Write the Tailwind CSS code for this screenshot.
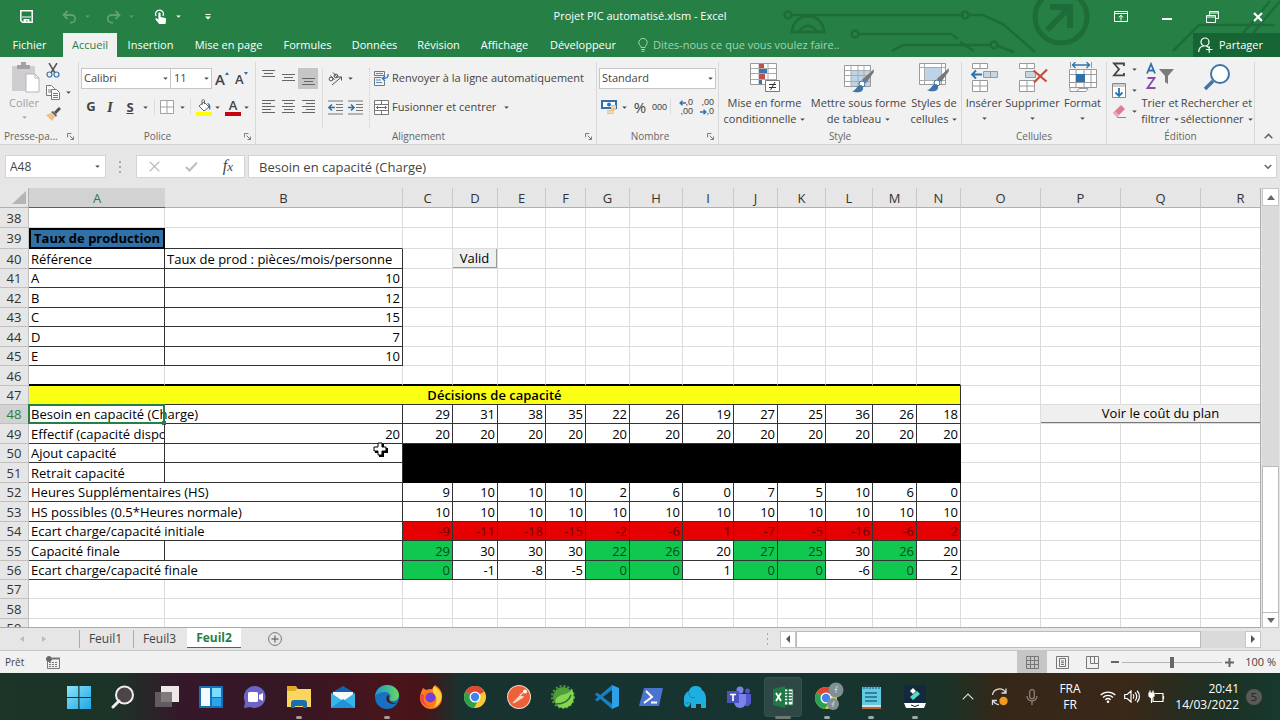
<!DOCTYPE html>
<html lang="fr">
<head>
    <meta charset="UTF-8">
    <meta name="viewport" content="width=device-width, initial-scale=1.0">
    <title>Projet PIC automatisé.xlsm - Excel</title>
    <script src="https://cdn.jsdelivr.net/npm/@tailwindcss/browser@4"></script>
</head>
<body class="h-screen overflow-hidden flex flex-col bg-[#e6e6e6] font-['Open_Sans',sans-serif] text-[11px] text-[#444]">
    <!-- Shared icons -->
    <svg class="hidden">
        <symbol id="caret" viewBox="0 0 6 4"><path d="M0 .5h6L3 3.5z" fill="currentColor"/></symbol>
        <symbol id="launcher" viewBox="0 0 8 8"><path d="M.5 5V.5H5M3 3l4 4M7.500 4v3.500H4" fill="none" stroke="currentColor"/></symbol>
    </svg>

    <!-- Title bar and tabs -->
    <header class="relative bg-[#268046] text-white shrink-0">
        <svg class="absolute right-0 top-0 w-[500px] h-[57px]" viewBox="0 0 500 57" fill="none" stroke="#1e6c39" stroke-width="2.500">
            <circle cx="8" cy="15" r="3.500"/><path d="M12 15h172"/>
            <circle cx="75" cy="34" r="3.500"/><path d="M79 34h92l7 5M112 51l11-6h72"/>
            <path d="M12 32a16 16 0 0 1 32 0zM20 31a9 9 0 0 1 16 0" stroke-width="3"/>
            <circle cx="185" cy="15" r="3.500"/><path d="M189 15h14l20 9 32 28M180 42l14 9M180 45h31"/><circle cx="214" cy="45" r="3.500"/><path d="M218 46l16 6"/>
            <circle cx="281" cy="17" r="26" stroke-width="5"/>
            <path d="M267 30l21-21M270 7h20v21" stroke-width="6"/>
            <path d="M393 51l26-26h76M448 51l42-50M458 51l42-50"/>
        </svg>
        <div class="relative h-[33px] flex items-center">
            <div class="w-[300px] flex items-center pl-5 shrink-0">
                <button aria-label="Enregistrer"><svg class="w-[13px] h-[13px]" viewBox="0 0 13 13"><path d="M.8.8h11.400v11.400H2.500L.8 10.500z" fill="none" stroke="#fff" stroke-width="1.500"/><path d="M2 6.500h9v1H2zM3.500 9h6v4h-2v-2.500H6V13H3.500z" fill="#fff"/></svg></button>
                <button aria-label="Annuler" class="ml-[29px] text-[#5fa078] flex items-center gap-2"><svg class="w-[15px] h-[14px]" viewBox="0 0 15 14" fill="none" stroke="currentColor" stroke-width="1.800"><path d="M5.500 1L1.500 5l4 4M2 5h7.500a3.800 3.800 0 0 1 0 7.600H8"/></svg><svg class="w-[5px] h-[3px]"><use href="#caret"/></svg></button>
                <button aria-label="Rétablir" class="ml-4 text-[#5fa078] flex items-center gap-2"><svg class="w-[15px] h-[14px]" viewBox="0 0 15 14" fill="none" stroke="currentColor" stroke-width="1.800"><path d="M9.500 1l4 4-4 4M13 5H5.500a3.800 3.800 0 0 0 0 7.600H7"/></svg><svg class="w-[5px] h-[3px]"><use href="#caret"/></svg></button>
                <button aria-label="Mode tactile" class="ml-5 flex items-center gap-2"><svg class="w-[14px] h-[15px]" viewBox="0 0 14 15"><path d="M2 7a4 4 0 1 1 7 0" fill="none" stroke="#fff" stroke-width="1.300"/><path d="M4.400 4.500c0-1.500 2.200-1.500 2.200 0V8l4.600 1c.7.200 1 .6.900 1.300L11.500 15H5.200L1.500 10.500c-.4-.9.500-1.500 1.300-1l1.600 1z" fill="#fff"/></svg><svg class="w-[5px] h-[3px]"><use href="#caret"/></svg></button>
                <button aria-label="Personnaliser la barre" class="ml-6"><svg class="w-[6px] h-[6px]" viewBox="0 0 6 6" fill="#fff"><path d="M.5 0h5v1h-5zM0 2.500h6L3 5.500z"/></svg></button>
            </div>
            <h1 class="flex-1 text-center pr-5">Projet PIC automatisé.xlsm - Excel</h1>
            <div class="w-[280px] flex items-center justify-end gap-[34px] pr-[17px] shrink-0">
                <button aria-label="Options du ruban"><svg class="w-[14px] h-[11px]" viewBox="0 0 14 11" fill="none" stroke="#fff"><path d="M.5.5h13v10H.5zM.5 2.500h13M7 9.500v-5M4.700 6.500L7 4.300l2.300 2.200"/></svg></button>
                <button aria-label="Réduire"><svg class="w-[10px] h-[10px]" viewBox="0 0 10 10"><path d="M0 6h10v2H0z" fill="#fff"/></svg></button>
                <button aria-label="Restaurer"><svg class="w-[13px] h-[12px]" viewBox="0 0 13 12" fill="none" stroke="#fff"><path d="M.5 4.500h9v7h-9zM.5 6h9M3.500 4V.500h9v7H10M3.500 2h9"/></svg></button>
                <button aria-label="Fermer"><svg class="w-[10px] h-[10px]" viewBox="0 0 10 10"><path d="M1 1l8 8M9 1L1 9" stroke="#fff" stroke-width="2.200"/></svg></button>
            </div>
        </div>
        <nav class="relative h-6 flex items-stretch">
            <button class="w-[63px] pr-1">Fichier</button>
            <button class="w-[54px] bg-[#f1f1f1] text-[#268046]">Accueil</button>
            <button class="w-[67px]">Insertion</button>
            <button class="w-[89px]">Mise en page</button>
            <button class="w-[69px]">Formules</button>
            <button class="w-[65px]">Données</button>
            <button class="w-[63px]">Révision</button>
            <button class="w-[69px]">Affichage</button>
            <button class="w-[88px]">Développeur</button>
            <label class="flex items-center gap-[5px] ml-[11px] text-[#a5d0b3]">
                <svg class="w-[10px] h-[14px]" viewBox="0 0 10 14" fill="none" stroke="currentColor"><path d="M3 9.500C3 7.500.8 7 .8 4.600a4.200 4.200 0 0 1 8.400 0C9.200 7 7 7.500 7 9.500zM3 11.500h4M3.500 13.300h3"/></svg>
                <input type="text" aria-label="Dites-nous ce que vous voulez faire" placeholder="Dites-nous ce que vous voulez faire.." class="w-[220px] bg-transparent outline-none placeholder:text-[#a5d0b3]">
            </label>
            <button class="ml-auto w-[87px] bg-[#176534] flex items-center gap-[6px] pl-[5px]">
                <svg class="w-[15px] h-[16px]" viewBox="0 0 15 16" fill="none" stroke="#fff" stroke-width="1.200"><circle cx="7" cy="5" r="4"/><path d="M.7 15c0-3 2-5.500 5-6M8.500 9l2 1.500M8 12.500h6.500M11.200 9.300v6.400"/></svg>
                Partager
            </button>
        </nav>
    </header>

    <!-- Ribbon -->
    <section class="h-[88px] bg-[#f1f1f1] border-b border-[#d2d2d2] flex shrink-0 pt-[5px]">
        <div class="w-[79px] shrink-0 border-r border-[#d8d8d8] flex flex-col">
            <div class="flex-1 flex gap-[6px] pl-2">
                <button class="w-8 flex flex-col items-center text-[#a0a0a0]">
                    <svg class="w-[28px] h-[32px] ml-1 shrink-0" viewBox="0 0 28 32"><path d="M0 4h23v25H0z" fill="#cfcdd1"/><path d="M5 3h4V0h5v3h4v4H5z" fill="#a4a2a6"/><path d="M14 12h9l4 4v14H14z" fill="#fff" stroke="#b5b5b5"/><path d="M23 12v4h4" fill="none" stroke="#b5b5b5"/></svg>
                    <span class="leading-4 mt-[1px]">Coller</span>
                    <svg class="w-[5px] h-[3px] mt-[5px]"><use href="#caret"/></svg>
                </button>
                <div class="flex flex-col gap-[7px] pt-[1px]">
                    <button aria-label="Couper"><svg class="w-[14px] h-[15px]" viewBox="0 0 14 15" fill="none"><path d="M3 0l6 10M11 0L5 10" stroke="#555" stroke-width="1.500"/><circle cx="3.500" cy="11.500" r="2.500" stroke="#3a77ab" stroke-width="1.200"/><circle cx="10.500" cy="11.500" r="2.500" stroke="#3a77ab" stroke-width="1.200"/></svg></button>
                    <button class="flex items-center gap-[6px]" aria-label="Copier"><svg class="w-[14px] h-[15px]" viewBox="0 0 14 15" fill="#fff" stroke="#777"><path d="M.5.500h5l3 3v7h-8z"/><path d="M2 5h3M2 7h3"/><path d="M5.500 4.500h5l3 3v7h-8z"/><path d="M7 8.500h5M7 10.500h5M7 12.500h5"/></svg><svg class="w-[5px] h-[3px]"><use href="#caret"/></svg></button>
                    <button aria-label="Reproduire la mise en forme"><svg class="w-[15px] h-[14px]" viewBox="0 0 15 14"><path d="M0 8l5-2 4 4-3 4z" fill="#edc084"/><path d="M5 5l2-1 4 4-1 2z" fill="#666"/><path d="M9 6l5-5" stroke="#555" stroke-width="3"/></svg></button>
                </div>
            </div>
            <div class="h-4 flex items-center justify-between pl-1 pr-1 text-[10px] text-[#666]">Presse-pa...<svg class="w-[7px] h-[7px]"><use href="#launcher"/></svg></div>
        </div>

        <div class="w-[177px] shrink-0 border-r border-[#d8d8d8] flex flex-col">
            <div class="flex-1 flex flex-col pt-[6px] gap-2 pl-[2px]">
                <div class="flex items-center">
                    <div class="relative"><select aria-label="Police" class="appearance-none w-[90px] h-[21px] bg-white border border-[#c6c6c6] pl-[2px] outline-none"><option>Calibri</option></select><svg class="absolute right-[3px] top-[9px] w-[5px] h-[3px]"><use href="#caret"/></svg></div>
                    <div class="relative"><select aria-label="Taille" class="appearance-none w-[41px] h-[21px] bg-white border border-l-0 border-[#c6c6c6] pl-[3px] outline-none"><option>11</option></select><svg class="absolute right-[3px] top-[9px] w-[5px] h-[3px]"><use href="#caret"/></svg></div>
                    <button class="ml-[3px] flex text-[15px] leading-5 font-semibold" aria-label="Agrandir">A<svg class="w-1 h-[3px] mt-[3px] text-[#2f72ab]" viewBox="0 0 4 3"><path d="M0 3h4L2 0z" fill="currentColor"/></svg></button>
                    <button class="ml-[6px] flex text-[13px] leading-5 font-semibold" aria-label="Réduire la police">A<svg class="w-1 h-[3px] mt-[3px] text-[#2f72ab]" viewBox="0 0 4 3"><path d="M0 0h4L2 3z" fill="currentColor"/></svg></button>
                </div>
                <div class="flex items-center h-5">
                    <button class="w-[20px] text-[13px] font-bold">G</button>
                    <button class="w-[18px] text-[15px] font-bold italic font-['Liberation_Serif',serif]">I</button>
                    <button class="w-[22px] text-[13px] leading-4 font-bold underline">S</button>
                    <svg class="w-[5px] h-[3px] ml-[2px]"><use href="#caret"/></svg>
                    <i class="w-px h-4 bg-[#dcdcdc] ml-[6px]"></i>
                    <button class="ml-[5px]" aria-label="Bordures"><svg class="w-[14px] h-[14px]" viewBox="0 0 14 14" fill="#fff" stroke="#a0a0a0"><path d="M.5.500h13v13H.5zM7 1v12M1 7h12"/></svg></button>
                    <svg class="w-[5px] h-[3px] ml-[6px]"><use href="#caret"/></svg>
                    <i class="w-px h-4 bg-[#dcdcdc] ml-[5px]"></i>
                    <button class="ml-[5px]" aria-label="Couleur de remplissage"><svg class="w-[16px] h-[17px]" viewBox="0 0 16 17"><path d="M0 13h16v4H0z" fill="#ffff00"/><path d="M3 7l5-4 5 5-5 4z" fill="#fff" stroke="#666"/><path d="M6 6V2c0-2 2.500-2 2.500 0v3" fill="none" stroke="#666"/><path d="M11 4c3 0 4 3 3 7-2-1 0-4-3-7z" fill="#2f72ab"/></svg></button>
                    <svg class="w-[5px] h-[3px] ml-[3px]"><use href="#caret"/></svg>
                    <button class="ml-[5px] w-4 flex flex-col items-center text-[13px] leading-[13px] font-semibold" aria-label="Couleur de police">A<i class="w-4 h-1 bg-[#c80010]"></i></button>
                    <svg class="w-[5px] h-[3px] ml-[3px]"><use href="#caret"/></svg>
                </div>
            </div>
            <div class="h-4 flex items-center pr-1 text-[10px] text-[#666]"><span class="flex-1 text-center pr-2">Police</span><svg class="w-[7px] h-[7px]"><use href="#launcher"/></svg></div>
        </div>

        <div class="w-[341px] shrink-0 border-r border-[#d8d8d8] flex flex-col">
            <div class="flex-1 flex pt-[6px]">
                <div class="w-[66px] shrink-0 flex flex-col gap-2 pl-[2px]">
                    <div class="flex h-[21px]">
                        <button class="w-5" aria-label="Aligner en haut"><svg class="w-5 h-5" viewBox="0 0 20 20"><path d="M4 1.500h13M6 4.500h9M4 7.500h13" stroke="#666"/></svg></button>
                        <button class="w-5" aria-label="Aligner au centre"><svg class="w-5 h-5" viewBox="0 0 20 20"><path d="M4 5.500h13M6 8.500h9M4 11.500h13" stroke="#666"/></svg></button>
                        <button class="w-5 h-[21px] bg-[#c6c6c6]" aria-label="Aligner en bas"><svg class="w-5 h-5" viewBox="0 0 20 20"><path d="M4 9.500h13M6 12.500h9M4 15.500h13" stroke="#666"/></svg></button>
                    </div>
                    <div class="flex h-5">
                        <button class="w-5" aria-label="Aligner à gauche"><svg class="w-5 h-5" viewBox="0 0 20 20"><path d="M4 3.500h13M4 6.500h9M4 9.500h13M4 12.500h9M4 15.500h13" stroke="#666"/></svg></button>
                        <button class="w-5" aria-label="Centrer"><svg class="w-5 h-5" viewBox="0 0 20 20"><path d="M4 3.500h13M6 6.500h9M4 9.500h13M6 12.500h9M4 15.500h13" stroke="#666"/></svg></button>
                        <button class="w-5" aria-label="Aligner à droite"><svg class="w-5 h-5" viewBox="0 0 20 20"><path d="M4 3.500h13M8 6.500h9M4 9.500h13M8 12.500h9M4 15.500h13" stroke="#666"/></svg></button>
                    </div>
                </div>
                <div class="w-[47px] shrink-0 flex flex-col gap-2 border-l border-[#dcdcdc] pl-[5px]">
                    <button class="h-[21px] flex items-center gap-[5px]" aria-label="Orientation"><svg class="w-[15px] h-[14px]" viewBox="0 0 15 14" fill="none" stroke="#555"><circle cx="3" cy="7" r="1.900"/><path d="M2.500 3.500l4 4.500"/><circle cx="8" cy="4" r="1.900"/><path d="M5 .500l4.500 5M4 13l9.500-8M13.500 8.500V5H10"/></svg><svg class="w-[5px] h-[3px]"><use href="#caret"/></svg></button>
                    <div class="flex h-5 items-center gap-[5px]">
                        <button aria-label="Diminuer le retrait"><svg class="w-[15px] h-[15px]" viewBox="0 0 15 15" fill="none"><path d="M0 1h15M8 4.500h7M8 7.500h7M8 10.500h7M0 14h15" stroke="#777"/><path d="M7 7.500H1.500M4 4.500l-3 3 3 3" stroke="#2f72ab" stroke-width="1.600"/></svg></button>
                        <button aria-label="Augmenter le retrait"><svg class="w-[15px] h-[15px]" viewBox="0 0 15 15" fill="none"><path d="M0 1h15M8 4.500h7M8 7.500h7M8 10.500h7M0 14h15" stroke="#777"/><path d="M0 7.500h5.500M3 4.500l3 3-3 3" stroke="#2f72ab" stroke-width="1.600"/></svg></button>
                    </div>
                </div>
                <div class="flex flex-col gap-2 border-l border-dotted border-[#ccc] pl-1 whitespace-nowrap">
                    <button class="h-[21px] flex items-center gap-[3px]"><svg class="w-[15px] h-[15px]" viewBox="0 0 15 15" fill="none"><path d="M.5.500h10v4H.5zM.5 6.500h7M.5 6.500v8h10v-4" stroke="#777"/><path d="M2 2.500h7M2 9h5M2 11.500h6" stroke="#5b8fbd"/><path d="M14 3c.5 3-1 4.500-5 4.500M11 5L8.500 7.500 11 10" stroke="#2f72ab" stroke-width="1.300"/></svg>Renvoyer à la ligne automatiquement</button>
                    <button class="h-5 flex items-center gap-[3px]"><svg class="w-[15px] h-[15px]" viewBox="0 0 15 15" fill="#fff" stroke="#777"><path d="M.5.500h14v14H.5zM.5 4.500h14M.5 10.500h14M7.500.500v4M7.500 10.500v4"/><path d="M2.500 7.500h10M4 6L2.500 7.500 4 9M11 6l1.500 1.500L11 9" stroke="#2f72ab" fill="none"/></svg>Fusionner et centrer<svg class="w-[5px] h-[3px] ml-[5px]"><use href="#caret"/></svg></button>
                </div>
            </div>
            <div class="h-4 flex items-center pr-1 text-[10px] text-[#666]"><span class="flex-1 text-center pr-1">Alignement</span><svg class="w-[7px] h-[7px]"><use href="#launcher"/></svg></div>
        </div>

        <div class="w-[122px] shrink-0 border-r border-[#d8d8d8] flex flex-col">
            <div class="flex-1 flex flex-col pt-[6px] gap-2 pl-[2px]">
                <div class="relative w-[117px]"><select aria-label="Format de nombre" class="appearance-none w-full h-[21px] bg-white border border-[#c6c6c6] pl-[2px] outline-none"><option>Standard</option></select><svg class="absolute right-[3px] top-[9px] w-[5px] h-[3px]"><use href="#caret"/></svg></div>
                <div class="flex items-center h-5 pl-[2px]">
                    <button aria-label="Format comptable"><svg class="w-4 h-[15px]" viewBox="0 0 16 15"><path d="M1 1h14v7H1z" fill="#fff" stroke="#2f72ab" stroke-width="2"/><circle cx="8" cy="4.500" r="2" fill="#2f72ab"/><path d="M10 5h5v5h-5zM6 10h7v4H6z" fill="#edc084"/><path d="M10 7h5M6 12h7" stroke="#f1f1f1"/></svg></button>
                    <svg class="w-[5px] h-[3px] ml-[5px]"><use href="#caret"/></svg>
                    <button class="ml-[6px] w-[14px] text-[15px] leading-5">%</button>
                    <button class="ml-[5px] text-[9px] leading-5 font-['Liberation_Sans',sans-serif]">000</button>
                    <i class="w-px h-4 bg-[#dcdcdc] ml-[3px]"></i>
                    <button class="ml-[6px] w-4 text-[9px] leading-[9px] flex flex-col items-end font-['Liberation_Sans',sans-serif]" aria-label="Ajouter une décimale">
                        <span class="flex items-center"><svg class="w-[7px] h-[6px]" viewBox="0 0 7 6" fill="none" stroke="#2f72ab" stroke-width="1.500"><path d="M7 3H1.500M3.500.7L1.200 3l2.300 2.300"/></svg>,0</span><span>,00</span>
                    </button>
                    <button class="ml-[5px] w-4 text-[9px] leading-[9px] flex flex-col items-end font-['Liberation_Sans',sans-serif]" aria-label="Réduire les décimales">
                        <span>,00</span><span class="flex items-center"><svg class="w-[7px] h-[6px]" viewBox="0 0 7 6" fill="none" stroke="#2f72ab" stroke-width="1.500"><path d="M0 3h5.500M3.500.7L5.800 3 3.500 5.300"/></svg>,0</span>
                    </button>
                </div>
            </div>
            <div class="h-4 flex items-center pr-1 text-[10px] text-[#666]"><span class="flex-1 text-center pr-1">Nombre</span><svg class="w-[7px] h-[7px]"><use href="#launcher"/></svg></div>
        </div>

        <div class="w-[243px] shrink-0 border-r border-[#d8d8d8] flex flex-col">
            <div class="flex-1 flex justify-center whitespace-nowrap">
                <button class="w-[90px] flex flex-col items-center">
                    <svg class="w-[30px] h-[31px] shrink-0" viewBox="0 0 30 31"><path d="M.5 1.500h26v21H.5z" fill="#fff" stroke="#999"/><path d="M1 6.500h25M1 11.500h25M1 17.500h25M9 2v20M18 2v20" stroke="#aaa"/><path d="M9 2h5v4H9zM9 12h6v5H9z" fill="#c0504d"/><path d="M9 7h8v4H9zM9 18h3v4H9z" fill="#3f74a8"/><path d="M15.500 18.500h14v11h-14z" fill="#fff" stroke="#777"/><path d="M19 22.500h7M19 25.500h7M25 20L20.500 28" stroke="#333"/></svg>
                    <span class="leading-4 mt-[2px]">Mise en forme</span>
                    <span class="leading-4 flex items-center gap-1">conditionnelle<svg class="w-[5px] h-[3px]"><use href="#caret"/></svg></span>
                </button>
                <button class="w-[98px] flex flex-col items-center">
                    <svg class="w-[30px] h-[31px] shrink-0" viewBox="0 0 30 31"><path d="M.5 3.500h26v21H.5z" fill="#fff" stroke="#999"/><path d="M7 9h19v15H7z" fill="#bcd3e8"/><path d="M1 8.500h25M1 13.500h25M1 19.500h25M7 4v20M14 4v20M20 4v20" stroke="#aaa"/><path d="M29 10l-7 10-3-2L29 9z" fill="#777" stroke="#777" stroke-width="1.500"/><circle cx="18" cy="22" r="3" fill="#fff" stroke="#2f72ab"/><path d="M8 29c4 0 4-5 9-6 3 1 3 6-1 7-3 .7-6 .3-8-1z" fill="#3f74a8"/></svg>
                    <span class="leading-4 mt-[2px]">Mettre sous forme</span>
                    <span class="leading-4 flex items-center gap-1">de tableau<svg class="w-[5px] h-[3px]"><use href="#caret"/></svg></span>
                </button>
                <button class="w-[53px] flex flex-col items-center">
                    <svg class="w-[30px] h-[31px] shrink-0" viewBox="0 0 30 31"><path d="M.5 1.500h26v21H.5z" fill="#fff" stroke="#999"/><path d="M5 6h17v12H5z" fill="#bcd3e8"/><path d="M1 5.500h25M1 18.500h25M5.500 2v20M22.500 2v20" stroke="#aaa"/><path d="M29 9l-7 10-3-2L29 8z" fill="#777" stroke="#777" stroke-width="1.500"/><circle cx="18" cy="21" r="3" fill="#fff" stroke="#2f72ab"/><path d="M8 28c4 0 4-5 9-6 3 1 3 6-1 7-3 .7-6 .3-8-1z" fill="#3f74a8"/></svg>
                    <span class="leading-4 mt-[2px]">Styles de</span>
                    <span class="leading-4 flex items-center gap-1">cellules<svg class="w-[5px] h-[3px]"><use href="#caret"/></svg></span>
                </button>
            </div>
            <div class="h-4 leading-4 text-center text-[10px] text-[#666]">Style</div>
        </div>

        <div class="w-[145px] shrink-0 border-r border-[#d8d8d8] flex flex-col">
            <div class="flex-1 flex justify-center whitespace-nowrap">
                <button class="w-10 flex flex-col items-center">
                    <svg class="w-[28px] h-[31px] shrink-0" viewBox="0 0 28 31" fill="#fff" stroke="#999"><path d="M2.500 1.500h15v5h-15zM10 1.500v5M2.500 18.500h15v11h-15zM10 18.500v11M2.500 24h15"/><path d="M13.500 9.500h14v6h-14zM20.500 9.500v6" fill="#c4d6e0"/><path d="M12 12.500H2M6 8.500l-4 4 4 4" stroke="#2f72ab" stroke-width="1.800" fill="none"/></svg>
                    <span class="leading-4 mt-[2px]">Insérer</span>
                    <svg class="w-[5px] h-[3px] mt-[6px]"><use href="#caret"/></svg>
                </button>
                <button class="w-[57px] flex flex-col items-center">
                    <svg class="w-[30px] h-[31px] shrink-0" viewBox="0 0 30 31" fill="#fff" stroke="#999"><path d="M1.500 1.500h15v5h-15zM9 1.500v5M1.500 18.500h15v11h-15zM9 18.500v11M1.500 24h15"/><path d="M7.500 9.500h10v6h-10z" fill="#c4d6e0"/><path d="M15.500 8.500l13 11M29 7.500L16 20.500" stroke="#c94a3a" stroke-width="2.200" fill="none"/></svg>
                    <span class="leading-4 mt-[2px]">Supprimer</span>
                    <svg class="w-[5px] h-[3px] mt-[6px]"><use href="#caret"/></svg>
                </button>
                <button class="w-[43px] flex flex-col items-center">
                    <svg class="w-[28px] h-[31px] shrink-0" viewBox="0 0 28 31" fill="#fff" stroke="#999"><path d="M.5 7.500h27v18H.5zM.5 12.500h27M.5 20.500h27M7 7.500v18M15 7.500v18M22 7.500v18M1 25.500v4h7l2-3h9l-2 3H8"/><path d="M7 12h9v8H7z" fill="#2f72ab" stroke="none"/><path d="M3 3h18M6.500 0l-3 3 3 3M17.500 0l3 3-3 3" stroke="#2f72ab" stroke-width="1.300" fill="none"/><path d="M1.500 0v6M22.500 0v6"/></svg>
                    <span class="leading-4 mt-[2px]">Format</span>
                    <svg class="w-[5px] h-[3px] mt-[6px]"><use href="#caret"/></svg>
                </button>
            </div>
            <div class="h-4 leading-4 text-center text-[10px] text-[#666]">Cellules</div>
        </div>

        <div class="w-[148px] shrink-0 border-r border-[#d8d8d8] flex flex-col">
            <div class="flex-1 flex whitespace-nowrap pl-[5px]">
                <div class="w-[28px] flex flex-col gap-[6px]">
                    <button class="flex items-center gap-[6px]" aria-label="Somme"><svg class="w-[14px] h-[15px]" viewBox="0 0 14 15"><path d="M12 4V1.500H2L7 7.200 2 13.300h10V11" fill="none" stroke="#444" stroke-width="1.800"/></svg><svg class="w-[5px] h-[3px]"><use href="#caret"/></svg></button>
                    <button class="flex items-center gap-[6px]" aria-label="Remplissage"><svg class="w-[14px] h-[15px]" viewBox="0 0 14 15"><path d="M.5.500h13v14H.5z" fill="#fff" stroke="#888"/><path d="M1 1h12v3H1z" fill="#ccc"/><path d="M7 5v8M3.500 9.500L7 13l3.500-3.500" fill="none" stroke="#2f72ab" stroke-width="1.800"/></svg><svg class="w-[5px] h-[3px]"><use href="#caret"/></svg></button>
                    <button class="flex items-center gap-[6px]" aria-label="Effacer"><svg class="w-[14px] h-[15px]" viewBox="0 0 14 15"><path d="M1 9L9 1l4 4-8 8z" fill="#dc7c95"/><path d="M1 9l2-2 4 4-2 2z" fill="#eba9b8"/><path d="M5 13.500h9" stroke="#888"/></svg><svg class="w-[5px] h-[3px]"><use href="#caret"/></svg></button>
                </div>
                <button class="w-[40px] flex flex-col items-center">
                    <svg class="w-[28px] h-[31px] shrink-0" viewBox="0 0 28 31" fill="none"><path d="M1 11.500L5 2l4 9.500M2.500 8.500h5" stroke="#2f72ab" stroke-width="1.800"/><path d="M1.500 16h7l-7 10h8" stroke="#8b4aa5" stroke-width="1.800"/><path d="M13 7h15l-6 7v8l-3-2v-6z" fill="#7b7b7b"/></svg>
                    <span class="leading-4 mt-[2px]">Trier et</span>
                    <span class="leading-4 flex items-center gap-1">filtrer<svg class="w-[5px] h-[3px]"><use href="#caret"/></svg></span>
                </button>
                <button class="w-[73px] flex flex-col items-center">
                    <svg class="w-[28px] h-[31px] shrink-0" viewBox="0 0 28 31" fill="none"><circle cx="17" cy="12" r="9" fill="#fff" stroke="#3f74a8" stroke-width="2"/><path d="M10 19l-8 8" stroke="#3f74a8" stroke-width="3.500"/></svg>
                    <span class="leading-4 mt-[2px]">Rechercher et</span>
                    <span class="leading-4 flex items-center gap-1">sélectionner<svg class="w-[5px] h-[3px]"><use href="#caret"/></svg></span>
                </button>
            </div>
            <div class="h-4 leading-4 text-center text-[10px] text-[#666]">Édition</div>
        </div>
        <button class="ml-auto self-end pr-[7px] pb-[5px]" aria-label="Réduire le ruban"><svg class="w-[9px] h-[6px]" viewBox="0 0 9 6"><path d="M.7 5.200L4.500 1.400l3.800 3.800" fill="none" stroke="#666" stroke-width="1.600"/></svg></button>
    </section>

    <!-- Formula bar -->
    <section class="h-[43px] flex items-center gap-[3px] pl-[5px] pr-[3px] shrink-0 text-[13px]">
        <div class="relative"><input type="text" aria-label="Zone Nom" value="A48" class="w-[101px] h-[23px] bg-white border border-[#d4d4d4] pl-1 text-xs outline-none"><svg class="absolute right-[6px] top-[10px] w-[5px] h-[3px]"><use href="#caret"/></svg></div>
        <svg class="w-[24px] h-3" viewBox="0 0 24 12" fill="#aaa"><path d="M10 0h2v2h-2zM10 5h2v2h-2zM10 10h2v2h-2z"/></svg>
        <div class="w-[109px] h-[23px] bg-white border border-[#d4d4d4] flex items-center justify-between pl-3 pr-[11px]">
            <button aria-label="Annuler la saisie"><svg class="w-[11px] h-[11px]" viewBox="0 0 11 11"><path d="M.7.700l9.600 9.600M10.300.700L.7 10.300" stroke="#bdbdbd" stroke-width="1.300"/></svg></button>
            <button aria-label="Entrer"><svg class="w-[13px] h-[11px]" viewBox="0 0 13 11"><path d="M1 6l3.500 3.500L12 1.500" fill="none" stroke="#bdbdbd" stroke-width="2"/></svg></button>
            <button class="italic text-base leading-4 font-['Liberation_Serif',serif]" aria-label="Insérer une fonction">f<span class="text-[13px]">x</span></button>
        </div>
        <div class="relative flex-1"><input type="text" aria-label="Barre de formule" value="Besoin en capacité (Charge)" class="w-full h-[23px] bg-white border border-[#d4d4d4] pl-[10px] outline-none"><svg class="absolute right-[5px] top-[9px] w-2 h-[6px]" viewBox="0 0 8 6"><path d="M.8 1L4 4.200 7.200 1" fill="none" stroke="#666" stroke-width="1.600"/></svg></div>
    </section>

    <!-- Sheet -->
    <main class="flex-1 min-h-0 flex">
        <div class="relative flex-1 min-w-0 overflow-hidden border-r border-b border-[#ababab]">
            <div class="absolute inset-x-0 top-5 bottom-0 bg-white"></div>
            <table class="relative table-fixed w-[1281px] border-separate border-spacing-0 text-[13px] leading-[18px] text-black whitespace-nowrap">
                <colgroup id="cols"></colgroup>
                <thead id="head"></thead>
                <tbody id="grid"></tbody>
            </table>
            <svg class="absolute left-[373px] top-[254px] w-[15px] h-[15px]" viewBox="0 0 15 15"><path d="M6 2h5v4h4v5h-4v4H6v-4H2V6h4z" fill="#000"/><path d="M5 1h4v4h4v4H9v4H5V9H1V5h4z" fill="#fff" stroke="#000"/></svg>
        </div>
        <div class="w-[19px] flex flex-col px-px shrink-0 bg-[#e6e6e6]">
            <button class="h-[18px] bg-white border border-[#c6c6c6] flex items-center justify-center" aria-label="Défiler vers le haut"><svg class="w-2 h-[5px]" viewBox="0 0 8 5"><path d="M0 5h8L4 0z" fill="#666"/></svg></button>
            <div class="grow-[261] bg-[#dadada]"></div>
            <div class="grow-[146] bg-white border border-[#bbb]"></div>
            <button class="h-[15px] bg-white border border-t-0 border-[#c6c6c6] flex items-center justify-center" aria-label="Défiler vers le bas"><svg class="w-2 h-[5px]" viewBox="0 0 8 5"><path d="M0 0h8L4 5z" fill="#666"/></svg></button>
        </div>
    </main>

    <!-- Sheet tabs -->
    <section class="h-[23px] flex items-start shrink-0 border-b border-[#c6c6c6] text-xs">
        <div class="w-[79px] h-[21px] flex items-center pl-5 gap-[18px]">
            <button aria-label="Feuille précédente"><svg class="w-1 h-[6px]" viewBox="0 0 4 6"><path d="M4 0v6L0 3z" fill="#bbb"/></svg></button>
            <button aria-label="Feuille suivante"><svg class="w-1 h-[6px]" viewBox="0 0 4 6"><path d="M0 0v6l4-3z" fill="#bbb"/></svg></button>
        </div>
        <button class="w-[54px] h-[18px] mt-[2px] leading-4 pr-[2px] border-l border-[#ababab]">Feuil1</button>
        <button class="w-[54px] h-[18px] mt-[2px] leading-4 pr-[2px] border-l border-[#ababab]">Feuil3</button>
        <button class="w-[54px] h-[20px] leading-[18px] bg-white border-b border-[#268046] font-bold text-[#268046]">Feuil2</button>
        <button class="ml-[27px] mt-[4px]" aria-label="Nouvelle feuille"><svg class="w-[14px] h-[14px]" viewBox="0 0 14 14" fill="none" stroke="#777"><circle cx="7" cy="7" r="6.400"/><path d="M7 3.500v7M3.500 7h7" stroke-width="1.400"/></svg></button>
        <div class="ml-auto flex items-center w-[514px] h-[22px] pr-[19px]">
            <svg class="w-[14px] h-3" viewBox="0 0 14 12" fill="#aaa"><path d="M1 0h1v2H1zM1 5h1v2H1zM1 10h1v2H1z"/></svg>
            <button class="w-4 h-[17px] bg-white border border-[#c6c6c6] flex items-center justify-center" aria-label="Défiler à gauche"><svg class="w-1 h-2" viewBox="0 0 4 8"><path d="M4 0v8L0 4z" fill="#555"/></svg></button>
            <div class="grow-[406] h-[17px] bg-white border border-[#bbb]"></div>
            <div class="grow-[44] h-[17px] bg-[#dadada]"></div>
            <button class="w-4 h-[17px] bg-white border border-[#c6c6c6] flex items-center justify-center" aria-label="Défiler à droite"><svg class="w-1 h-2" viewBox="0 0 4 8"><path d="M0 0v8l4-4z" fill="#555"/></svg></button>
        </div>
    </section>

    <!-- Status bar -->
    <section class="h-[22px] bg-[#f1f1f1] flex items-center shrink-0">
        <span class="pl-[5px] w-[46px] text-[10px]">Prêt</span>
        <svg class="w-[14px] h-[13px]" viewBox="0 0 14 13" fill="none" stroke="#777"><path d="M1.500 5v7.500h12v-10H6"/><path d="M6 2.500h8" stroke-width="2"/><path d="M3 6.500h9M3 8.500h9M3 10.500h9" stroke-dasharray="2 1"/><circle cx="3" cy="3" r="2.600" fill="#666"/></svg>
        <div class="ml-auto flex items-center h-full">
            <button class="w-[30px] h-full bg-[#c6c6c6] flex items-center justify-center" aria-label="Normal"><svg class="w-[13px] h-[13px]" viewBox="0 0 13 13" fill="none" stroke="#777"><path d="M.5.500h12v12H.5zM4.500.500v12M8.500.500v12M.5 4.500h12M.5 8.500h12"/></svg></button>
            <button class="w-[30px] flex justify-center" aria-label="Mise en page"><svg class="w-[13px] h-[13px]" viewBox="0 0 13 13" fill="none" stroke="#777"><path d="M.5.500h12v12H.5zM3.500 2.500h6v8h-6zM5 5h3M5 6.700h3M5 8.500h3"/></svg></button>
            <button class="w-[30px] flex justify-center" aria-label="Sauts de page"><svg class="w-[13px] h-[13px]" viewBox="0 0 13 13" fill="none" stroke="#777"><path d="M.5.500h12v12H.5zM4.500.500v7h4v-7M8.500 7.500h4"/></svg></button>
            <button class="ml-1 w-[8px] h-[2px] bg-[#666]" aria-label="Zoom arrière"></button>
            <input type="range" aria-label="Zoom" min="0" max="100" value="50" class="appearance-none bg-transparent mx-[3px] w-[100px] h-4 [&::-webkit-slider-runnable-track]:h-px [&::-webkit-slider-runnable-track]:bg-[#b5b5b5] [&::-webkit-slider-thumb]:appearance-none [&::-webkit-slider-thumb]:w-1 [&::-webkit-slider-thumb]:h-[11px] [&::-webkit-slider-thumb]:-mt-[5px] [&::-webkit-slider-thumb]:bg-[#666]">
            <button aria-label="Zoom avant"><svg class="w-[9px] h-[9px]" viewBox="0 0 9 9"><path d="M4.500 0v9M0 4.500h9" stroke="#666" stroke-width="2"/></svg></button>
            <span class="w-[46px] text-right pr-1">100 %</span>
        </div>
    </section>

    <!-- Taskbar -->
    <footer class="h-[47px] shrink-0 flex items-center text-white text-xs bg-[linear-gradient(90deg,#1b3527_0%,#1c3327_9%,#35182a_14%,#351725_22%,#4a141b_31%,#461419_33%,#18332f_36%,#17342f_68%,#1b3326_74%,#352718_78%,#3a2818_88%,#1c3024_95%,#17392d_100%)]">
        <div class="flex pl-[57px] items-center">
            <button class="w-11 h-11 flex justify-center items-center" aria-label="Démarrer"><svg class="w-6 h-6" viewBox="0 0 24 24"><defs><linearGradient id="win" x2="1" y2="1"><stop stop-color="#8be4fb"/><stop offset="1" stop-color="#1ea6e4"/></linearGradient></defs><path d="M0 1h11.300v11H0zM12.500 1H24v11H12.500zM0 13h11.300v11H0zM12.500 13H24v11H12.500z" fill="url(#win)"/></svg></button>
            <button class="w-11 h-11 flex justify-center items-center" aria-label="Rechercher"><svg class="w-6 h-6" viewBox="0 0 24 24"><circle cx="13.500" cy="10" r="8.500" fill="#4c4548" stroke="#f0eef0" stroke-width="2"/><path d="M8 16l-6 6" stroke="#f0eef0" stroke-width="3" stroke-linecap="round"/></svg></button>
            <button class="w-11 h-11 flex justify-center items-center" aria-label="Affichage des tâches"><svg class="w-6 h-6" viewBox="0 0 24 24"><path d="M6 1h18v16H6z" fill="#ece8e8"/><path d="M0 7h17v15H0z" fill="#6b6767" fill-opacity=".85"/></svg></button>
            <button class="w-11 h-11 flex justify-center items-center" aria-label="Widgets"><svg class="w-6 h-6" viewBox="0 0 24 24"><rect y="1" width="24" height="22" rx="1" fill="#1672b8"/><path d="M2 3h9v18H2z" fill="#f2fbff"/><path d="M13 3h9v9h-9z" fill="#7bdcff"/><path d="M13 13h9v8h-9z" fill="#2ba5ec"/></svg></button>
            <button class="w-11 h-11 flex justify-center items-center" aria-label="Chat"><svg class="w-6 h-6" viewBox="0 0 24 24"><path d="M12 1a11 11 0 1 1-5 21L1 23l1-6A11 11 0 0 1 12 1z" fill="#6c63c4"/><rect x="5" y="7" width="10" height="10" rx="1.500" fill="#fff"/><path d="M16 10l4-2v8l-4-2z" fill="#fff"/></svg></button>
            <button class="w-11 h-11 flex justify-center items-center relative" aria-label="Explorateur"><svg class="w-6 h-6" viewBox="0 0 24 24"><path d="M0 1h9l2 3h13v18H0z" fill="#e0a92a"/><path d="M0 6h8l2-2h14v18H0z" fill="#fbd65c"/><path d="M4 23v-5a3 3 0 0 1 3-3h10a3 3 0 0 1 3 3v5h-4v-2H8v2z" fill="#1b6fae"/></svg><i class="absolute bottom-0 w-[6px] h-[3px] rounded-full bg-[#a99]"></i></button>
            <button class="w-11 h-11 flex justify-center items-center" aria-label="Courrier"><svg class="w-6 h-6" viewBox="0 0 24 24"><path d="M0 8l12-7 12 7v5H0z" fill="#1560a8"/><path d="M2 7h20v9H2z" fill="#f5f9fc"/><path d="M0 8l12 8 12-8v15H0z" fill="#36b6e8"/><path d="M0 23l12-9 12 9z" fill="#2193d4"/></svg></button>
            <button class="w-11 h-11 flex justify-center items-center relative" aria-label="Edge"><svg class="w-6 h-6" viewBox="0 0 24 24"><defs><linearGradient id="edge" x2="1"><stop stop-color="#1b95d6"/><stop offset="1" stop-color="#66d95a"/></linearGradient></defs><circle cx="12" cy="12" r="12" fill="#1871c0"/><path d="M0 11C1 4 6 0 12 0c7 0 12 5 12 10 0 4-3 6-6 6-2 0-4-.8-3-2.500 2-3-1-6.500-5-6.500C6 7 2 9 0 11z" fill="url(#edge)"/><path d="M14 10c-4 0-4 9 4 9 2 0 4-1 5-2-1 1-3 1-5 1-3-1-5-3-4-8z" fill="#4a1419"/></svg><i class="absolute bottom-0 w-[6px] h-[3px] rounded-full bg-[#a99]"></i></button>
            <button class="w-11 h-11 flex justify-center items-center" aria-label="Firefox"><svg class="w-6 h-6" viewBox="0 0 24 24"><path d="M3 5l1-2 3 2c2-1 4-1 6-1l3-4c5 3 8 8 7 13A11 11 0 0 1 1 13c0-3 1-6 2-8z" fill="#ff7a1c"/><path d="M15 1c6 4 9 8 7 14-1 3-4 6-7 7 4-6 3-10 0-13-2-3-1-6 0-8z" fill="#ffd23e"/><path d="M2 9c-2 6 2 12 9 13-5-2-7-6-6-12z" fill="#ff3d52"/><circle cx="11.500" cy="12.500" r="5" fill="#7440d8"/></svg></button>
            <button class="w-11 h-11 flex justify-center items-center" aria-label="Chrome"><svg class="w-6 h-6" viewBox="0 0 24 24"><circle cx="12" cy="12" r="11" fill="#fbc934"/><path d="M12 12L2.500 6.500a11 11 0 0 1 19 0z" fill="#e04636"/><path d="M12 12L2.500 6.500A11 11 0 0 0 11 23l5-9z" fill="#2da14f"/><circle cx="12" cy="12" r="5.500" fill="#fff"/><circle cx="12" cy="12" r="4.200" fill="#4284ee"/></svg></button>
            <button class="w-11 h-11 flex justify-center items-center" aria-label="Postman"><svg class="w-6 h-6" viewBox="0 0 24 24"><circle cx="12" cy="12" r="12" fill="#f4ddd0"/><circle cx="12" cy="12" r="11" fill="#ed6038"/><path d="M6 18l7-7 3 1-6 4zM13 10l4-3" fill="#f7d7c8" stroke="#f7d7c8" stroke-width="1.300"/><circle cx="18" cy="6.500" r="2" fill="#fff"/></svg></button>
            <button class="w-11 h-11 flex justify-center items-center" aria-label="Spring"><svg class="w-6 h-6" viewBox="0 0 24 24"><circle cx="12" cy="12" r="10" fill="#4f9e3c"/><circle cx="12" cy="12" r="11" fill="none" stroke="#4f9e3c" stroke-width="2" stroke-dasharray="2 2"/><path d="M21 4c4 10 1 18-8 19-6 0-10-4-8-9 3-6 12-3 16-10z" fill="#86d551"/><path d="M5 19c8 0 13-3 15-9" fill="none" stroke="#2f7030" stroke-width="1.500"/></svg></button>
            <button class="w-11 h-11 flex justify-center items-center" aria-label="Visual Studio Code"><svg class="w-6 h-6" viewBox="0 0 24 24"><path d="M17 5L2 16.500 0 14.500 17 0z" fill="#1a7fc4"/><path d="M17 19L2 7.500 0 9.500 17 24z" fill="#1a7fc4"/><path d="M17 0l7 3v18l-7 3z" fill="#2da0ea"/></svg></button>
            <button class="w-11 h-11 flex justify-center items-center" aria-label="PowerShell"><svg class="w-6 h-6" viewBox="0 0 24 24"><path d="M5 3h19l-4 18H0z" fill="#4a74d0"/><path d="M7 6l6 6-8 6M12 17.500h6" fill="none" stroke="#fff" stroke-width="2"/></svg></button>
            <button class="w-11 h-11 flex justify-center items-center" aria-label="Mammouth"><svg class="w-6 h-6" viewBox="0 0 24 24"><path d="M1 14c0-4 2-7 5-8 1-4 4-5 7-5s5 1 6 4c3 2 4 5 4 9v9h-5v-4h-5v4H8v-6c-1 3-2 5-4 5-3 0-3-3-3-8z" fill="#1cafe0"/><path d="M3 17c0 2 2 2 3 0M6 7c0 5 3 7 6 5" stroke="#0f86b5" fill="none"/></svg></button>
            <button class="w-11 h-11 flex justify-center items-center" aria-label="Teams"><svg class="w-6 h-6" viewBox="0 0 24 24"><circle cx="13" cy="5" r="3.500" fill="#7b83eb"/><circle cx="20.500" cy="6" r="2.500" fill="#5059c9"/><path d="M16 9h8v7a4 4 0 0 1-8 2z" fill="#5059c9"/><path d="M7 9h12v8a6 6 0 0 1-12 0z" fill="#7b83eb"/><path d="M0 6h12v12H0z" fill="#4b53bc"/><path d="M3 9.500h6M6 9.500V16" stroke="#fff" stroke-width="1.700"/></svg></button>
            <button class="w-11 h-11 flex justify-center items-center relative" aria-label="Excel"><i class="absolute inset-x-[3px] top-[2px] bottom-[2px] rounded bg-white/10 border border-white/5"></i><svg class="relative w-6 h-6" viewBox="0 0 24 24"><path d="M12 4h10v16H12z" fill="#fff" stroke="#1d6f42"/><path d="M13 7h8M13 10h8M13 13h8M13 16h8M17 4v16" stroke="#1d6f42" stroke-width="1.500"/><path d="M2 4l12-3v22L2 20z" fill="#1d7a45"/><path d="M5 8l5 8M10 8l-5 8" stroke="#fff" stroke-width="1.800"/></svg><i class="absolute bottom-0 w-4 h-[3px] rounded-full bg-[#6f7775]"></i></button>
            <button class="w-11 h-11 flex justify-center items-center relative" aria-label="Chrome, profils"><svg class="w-[30px] h-[30px] ml-1" viewBox="0 0 30 30"><circle cx="12" cy="16" r="11" fill="#fbc934"/><path d="M12 16L2.500 10.500a11 11 0 0 1 19 0z" fill="#e04636"/><path d="M12 16L2.500 10.500A11 11 0 0 0 11 27l5-9z" fill="#2da14f"/><circle cx="12" cy="16" r="5.500" fill="#fff"/><circle cx="12" cy="16" r="4.200" fill="#4284ee"/><circle cx="22" cy="8" r="7.500" fill="#7d9197"/><circle cx="19" cy="22" r="6" fill="#7d9197"/><path d="M24 5c-2-1-2 0-2 2v4M20.500 7.500h3M21 20c-2-1-2 0-2 2v3M17.500 22h3" stroke="#c5d0d3" fill="none"/></svg><i class="absolute bottom-0 w-[6px] h-[3px] rounded-full bg-[#9aa]"></i></button>
            <button class="w-11 h-11 flex justify-center items-center relative" aria-label="Bloc-notes"><svg class="w-6 h-6" viewBox="0 0 24 24"><path d="M3 2h19v19H3z" fill="#62cbe2"/><path d="M3 20h19v4H3z" fill="#d9dde0"/><path d="M3 22h19v2H3z" fill="#b06a35"/><path d="M6 8h12M6 12h12M6 16h12" stroke="#1c6b86" stroke-width="1.500"/><path d="M5 0v4M8 0v4M11 0v4M14 0v4M17 0v4M20 0v4" stroke="#1c4f68"/></svg><i class="absolute bottom-0 w-[6px] h-[3px] rounded-full bg-[#9aa]"></i></button>
            <button class="w-11 h-11 flex justify-center items-center relative" aria-label="Filmora"><svg class="w-6 h-6" viewBox="0 0 24 24"><rect x="1" width="22" height="20" rx="3" fill="#14293f"/><path d="M10 3l3 3-3 3-3-3z" fill="#fff"/><path d="M14 6l3 3-7 6-3-3z" fill="#4be0c0"/><path d="M1 18h22l-2 5H3z" fill="#fff"/><path d="M8 20l4 1.500 4-1.500" stroke="#222" fill="none"/></svg><i class="absolute bottom-0 w-[6px] h-[3px] rounded-full bg-[#9aa]"></i></button>
        </div>
        <div class="ml-auto flex items-center pr-[18px]">
            <button aria-label="Icônes cachées"><svg class="w-3 h-[7px]" viewBox="0 0 12 7"><path d="M.7 6.300L6 1l5.300 5.300" fill="none" stroke="#ddd" stroke-width="1.200"/></svg></button>
            <svg class="w-[18px] h-[18px] ml-[17px]" viewBox="0 0 18 18" fill="none" stroke="#ddd" stroke-width="1.300"><path d="M1.500 7a7 7 0 0 1 13-2.500M15 .500v4.500h-4.500M1.500 17v-4.500H6M2 12.500c1 2 3 4 6 4"/><circle cx="12.500" cy="13" r="4.200" fill="#f39a1e" stroke="none"/></svg>
            <svg class="w-[12px] h-[16px] ml-[17px]" viewBox="0 0 12 16" fill="none" stroke="#8a8078" stroke-width="1.300"><rect x="3.700" y=".7" width="4.600" height="9" rx="2.300"/><path d="M1 7a5 5 0 0 0 10 0M6 12v4"/></svg>
            <button class="ml-5 leading-4 w-[24px]">FRA<br>FR</button>
            <button class="ml-[18px] flex items-center gap-2" aria-label="Réseau, volume, batterie">
                <svg class="w-4 h-[13px]" viewBox="0 0 16 13" fill="none" stroke="#fff" stroke-width="1.300"><path d="M.7 5a10.500 10.500 0 0 1 14.600 0M3 7.500a7 7 0 0 1 10 0M5.300 9.700a4 4 0 0 1 5.400 0"/><circle cx="8" cy="11.700" r="1.300" fill="#fff" stroke="none"/></svg>
                <svg class="w-4 h-[13px]" viewBox="0 0 16 13" fill="none" stroke="#fff" stroke-width="1.200"><path d="M.7 4.500h2.500L7 1v11L3.200 8.500H.7zM9 4.500c1 1 1 3 0 4M11 2.500c2.300 2 2.300 6 0 8M13 .700c3.200 3 3.200 8.600 0 11.600"/></svg>
                <svg class="w-[17px] h-[14px]" viewBox="0 0 17 14" fill="none" stroke="#fff" stroke-width="1.200"><path d="M7 3.500h8v8H5V8M15.500 6v3"/><path d="M1 3h5v3L4.500 7.500h-2L1 6zM2 .500V3M5 .500V3M3.500 7v6" fill="#fff"/></svg>
            </button>
            <button class="ml-[14px] leading-4 text-right w-[60px] whitespace-nowrap flex flex-col items-end"><span>20:41</span><span>14/03/2022</span></button>
            <span class="ml-[7px] w-4 h-4 rounded-full bg-[#5a5a58] text-[#222] text-[11px] leading-4 text-center">5</span>
        </div>
    </footer>

    <script>
        // Column letters and widths
        const cols = [['A', 136], ['B', 238], ['C', 50], ['D', 45], ['E', 48], ['F', 40], ['G', 44], ['H', 53], ['I', 51], ['J', 44], ['K', 48], ['L', 47], ['M', 44], ['N', 44], ['O', 80], ['P', 80], ['Q', 80], ['R', 80]];
        const letters = cols.map(c => c[0]);

        const heights = { 38: 20, 39: 21, 40: 20, 42: 20, 44: 20, 46: 20, 49: 20, 51: 20, 53: 20, 55: 20, 58: 20 };

        // Label in column A, value in column B
        const rates = {
            40: ['Référence', 'Taux de prod : pièces/mois/personne'],
            41: ['A', 10], 42: ['B', 12], 43: ['C', 15], 44: ['D', 7], 45: ['E', 10]
        };

        // Label, value in B, values C to N
        const plan = {
            48: ['Besoin en capacité (Charge)', '', [29, 31, 38, 35, 22, 26, 19, 27, 25, 36, 26, 18]],
            49: ['Effectif (capacité dispo', 20, [20, 20, 20, 20, 20, 20, 20, 20, 20, 20, 20, 20]],
            50: ['Ajout capacité', '', []],
            51: ['Retrait capacité', '', []],
            52: ['Heures Supplémentaires (HS)', '', [9, 10, 10, 10, 2, 6, 0, 7, 5, 10, 6, 0]],
            53: ['HS possibles (0.5*Heures normale)', '', [10, 10, 10, 10, 10, 10, 10, 10, 10, 10, 10, 10]],
            54: ['Ecart charge/capacité initiale', '', [-9, -11, -18, -15, -2, -6, 1, -7, -5, -16, -6, 2]],
            55: ['Capacité finale', '', [29, 30, 30, 30, 22, 26, 20, 27, 25, 30, 26, 20]],
            56: ['Ecart charge/capacité finale', '', [0, -1, -8, -5, 0, 0, 1, 0, 0, -6, 0, 2]]
        };
        const green = [0, 4, 5, 7, 8, 10];

        const light = 'p-0 border-r border-b border-[#dcdcdc]';
        const dark = 'p-0 border-r border-b border-[#333]';
        const open = 'p-0 border-b border-[#333]';
        const num = ' text-right pr-[2px]';
        const txt = ' pl-[2px]';

        function cell(cls, text = '', span = 1) {
            return `<td class="${cls}" colspan="${span}">${text}</td>`;
        }

        function row(n) {
            let out = '';
            for (let i = 0; i < letters.length; i++) {
                const col = letters[i];
                if (n === 39 && col === 'A') {
                    out += cell('p-0 border-2 border-black bg-[#3072a8] font-bold text-[13px] leading-[17px] text-center', 'Taux de production');
                } else if (n === 39 && col === 'B') {
                    out += cell('p-0 border-r border-b border-r-[#dcdcdc] border-b-[#333]');
                } else if (n === 40 && col === 'D') {
                    out += cell(light, '<button class="block w-full h-[19px] leading-[17px] bg-[#efefef] border-b border-r border-[#999]">Valid</button>');
                } else if (rates[n] && i < 2) {
                    out += cell(dark + (i && n > 40 ? num : txt), rates[n][i]);
                } else if (n === 46 && i < 14) {
                    out += cell('p-0 border-r border-b-2 border-r-[#dcdcdc] border-b-black');
                } else if (n === 47 && i === 0) {
                    out += cell('p-0 border-r border-b border-[#333] bg-[#fbff14] font-semibold text-center', 'Décisions de capacité', 14);
                    i = 13;
                } else if (n === 48 && col === 'P') {
                    out += cell(light, '<button class="block w-full h-[18px] leading-[17px] bg-[#efefef] border-b border-[#777]">Voir le coût du plan</button>', 3);
                    i = 17;
                } else if (plan[n] && i === 0) {
                    const closed = [49, 50, 51, 55].includes(n);
                    const sel = n === 48 ? '<i class="absolute -left-px -top-px right-0 -bottom-px border-2 border-[#268046]"></i><i class="absolute -right-px -bottom-[2px] w-1 h-1 bg-[#268046]"></i>' : '';
                    out += cell((closed ? dark + ' overflow-hidden' : open) + ' relative' + txt, plan[n][0] + sel);
                } else if (plan[n] && i === 1) {
                    out += cell(dark + num, plan[n][1]);
                } else if (plan[n] && i < 14) {
                    const k = i - 2;
                    const value = plan[n][2][k] ?? '';
                    let fill = '';
                    if (n === 50 || n === 51) fill = ' bg-black border-black';
                    if (n === 54) fill = ' bg-[#e60000] text-[#6e0505]';
                    if (n >= 55 && green.includes(k)) fill = ' bg-[#10c850] text-[#0a4a1c]';
                    out += cell(dark + num + fill, value);
                } else {
                    out += cell(light);
                }
            }
            const active = n === 48 ? 'bg-[#d2d2d2] text-[#268046]' : 'bg-[#e6e6e6] text-[#333]';
            return `<tr style="height:${heights[n] || 19}px"><th class="p-0 font-normal border-r border-b border-[#c0c0c0] ${active}">${n}</th>${out}</tr>`;
        }

        document.getElementById('cols').innerHTML = '<col style="width:29px">' + cols.map(c => `<col style="width:${c[1]}px">`).join('');

        document.getElementById('head').innerHTML = '<tr class="h-5"><th class="p-0 bg-[#e6e6e6] border-r border-b border-[#b0b0b0]"><svg class="ml-auto mr-[2px] w-[14px] h-[13px]" viewBox="0 0 14 13"><path d="M14 0v13H0z" fill="#b5b5b5"/></svg></th>' +
            letters.map(l => `<th class="p-0 font-normal ${l === 'A' ? 'bg-[#d2d2d2] text-[#268046] border-b border-[#268046]' : 'bg-[#e6e6e6] text-[#333] border-r border-b border-r-[#c8c8c8] border-b-[#b0b0b0]'}">${l}</th>`).join('') + '</tr>';

        let body = '';
        for (let n = 38; n <= 59; n++) body += row(n);
        document.getElementById('grid').innerHTML = body;
    </script>
</body>
</html>
